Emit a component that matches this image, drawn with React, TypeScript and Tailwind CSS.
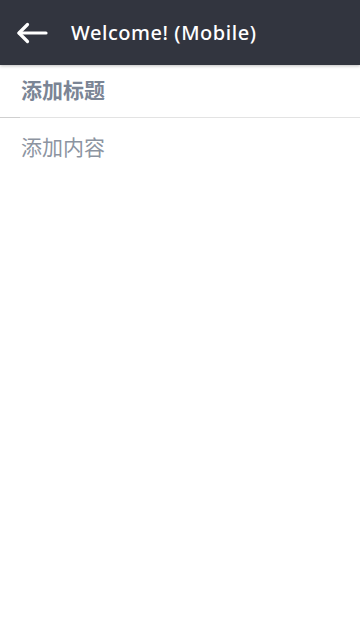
export default function App() {
  return (
    <div className="min-h-[640px] w-full bg-white font-['Roboto','Noto_Sans_CJK_SC',sans-serif]">
      <header className="flex h-[65px] items-center bg-[#32353f] shadow-[0_1px_3px_rgba(0,0,0,0.25)]">
        <button className="ml-[16px] flex h-[24px] w-[32px] items-center justify-center text-white">
          <svg width="32" height="22" viewBox="0 0 32 22" fill="none" stroke="currentColor" strokeWidth="3.2" strokeLinecap="round" strokeLinejoin="round">
            <path d="M30 11H3" />
            <path d="M11.5 2.5L3 11l8.5 8.5" />
          </svg>
        </button>
        <h1 className="ml-[23px] font-['Noto_Sans',sans-serif] text-[20px] font-medium tracking-[0.55px] text-white">Welcome! (Mobile)</h1>
      </header>
      <div className="relative border-b border-[#e3e3e3]">
        <input
          className="h-[52px] w-full px-[21px] text-[21px] font-bold text-[#7b8595] outline-none placeholder:text-[#7b8595]"
          placeholder="添加标题"
        />
        <span className="absolute -bottom-px left-0 h-px w-[20px] bg-[#cfcfcf]" />
      </div>
      <textarea
        className="block h-[400px] w-full resize-none px-[21px] pt-[14px] text-[21px] leading-[32px] text-[#8c94a1] outline-none placeholder:text-[#8c94a1]"
        placeholder="添加内容"
      />
    </div>
  );
}
